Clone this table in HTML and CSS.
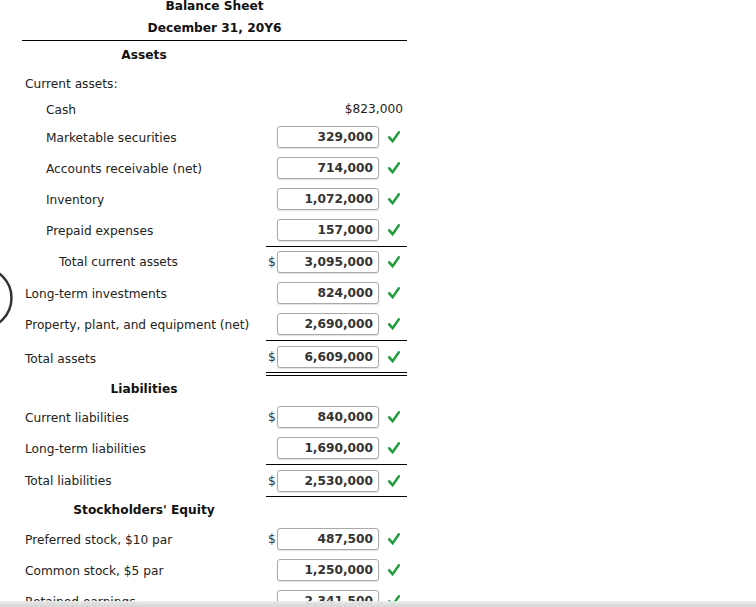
FILE: index.html
```html
<!DOCTYPE html>
<html>
<head>
<meta charset="utf-8">
<link rel="stylesheet" href="styles.css">
</head>
<body>
<svg class="side-circle" width="66" height="66" viewBox="0 0 66 66"><circle cx="33" cy="33" r="30.5" fill="none" stroke="#333" stroke-width="2.5"/></svg>
<div class="sheet">
  <div class="titles">
    <div class="title">Balance Sheet</div>
    <div class="title">December 31, 20Y6</div>
  </div>
  <div class="row head"><span class="label center">Assets</span></div>
  <div class="row cat"><span class="label">Current assets:</span></div>
  <div class="row cash"><span class="label ind1">Cash</span><span class="plain">$823,000</span></div>

  <div class="row"><span class="label ind1">Marketable securities</span><div class="amt"><span class="cur"></span><span class="box">329,000</span><svg class="ok" viewBox="0 0 12 12"><path d="M1.2 6.4 L4.6 10.2 L10.8 1.4"/></svg></div></div>
  <div class="row"><span class="label ind1">Accounts receivable (net)</span><div class="amt"><span class="cur"></span><span class="box">714,000</span><svg class="ok" viewBox="0 0 12 12"><path d="M1.2 6.4 L4.6 10.2 L10.8 1.4"/></svg></div></div>
  <div class="row"><span class="label ind1">Inventory</span><div class="amt"><span class="cur"></span><span class="box">1,072,000</span><svg class="ok" viewBox="0 0 12 12"><path d="M1.2 6.4 L4.6 10.2 L10.8 1.4"/></svg></div></div>
  <div class="row"><span class="label ind1">Prepaid expenses</span><div class="amt"><span class="cur"></span><span class="box">157,000</span><svg class="ok" viewBox="0 0 12 12"><path d="M1.2 6.4 L4.6 10.2 L10.8 1.4"/></svg></div></div>
  <div class="row total tca"><span class="label ind2">Total current assets</span><div class="amt"><span class="cur">$</span><span class="box">3,095,000</span><svg class="ok" viewBox="0 0 12 12"><path d="M1.2 6.4 L4.6 10.2 L10.8 1.4"/></svg></div></div>
  <div class="row"><span class="label">Long-term investments</span><div class="amt"><span class="cur"></span><span class="box">824,000</span><svg class="ok" viewBox="0 0 12 12"><path d="M1.2 6.4 L4.6 10.2 L10.8 1.4"/></svg></div></div>
  <div class="row"><span class="label">Property, plant, and equipment (net)</span><div class="amt"><span class="cur"></span><span class="box">2,690,000</span><svg class="ok" viewBox="0 0 12 12"><path d="M1.2 6.4 L4.6 10.2 L10.8 1.4"/></svg></div></div>
  <div class="row total grand"><span class="label">Total assets</span><div class="amt"><span class="cur">$</span><span class="box">6,609,000</span><svg class="ok" viewBox="0 0 12 12"><path d="M1.2 6.4 L4.6 10.2 L10.8 1.4"/></svg></div></div>

  <div class="row head liab"><span class="label center">Liabilities</span></div>
  <div class="row"><span class="label">Current liabilities</span><div class="amt"><span class="cur">$</span><span class="box">840,000</span><svg class="ok" viewBox="0 0 12 12"><path d="M1.2 6.4 L4.6 10.2 L10.8 1.4"/></svg></div></div>
  <div class="row"><span class="label">Long-term liabilities</span><div class="amt"><span class="cur"></span><span class="box">1,690,000</span><svg class="ok" viewBox="0 0 12 12"><path d="M1.2 6.4 L4.6 10.2 L10.8 1.4"/></svg></div></div>
  <div class="row total single"><span class="label">Total liabilities</span><div class="amt"><span class="cur">$</span><span class="box">2,530,000</span><svg class="ok" viewBox="0 0 12 12"><path d="M1.2 6.4 L4.6 10.2 L10.8 1.4"/></svg></div></div>

  <div class="row head equity"><span class="label center">Stockholders' Equity</span></div>
  <div class="row"><span class="label">Preferred stock, $10 par</span><div class="amt"><span class="cur">$</span><span class="box">487,500</span><svg class="ok" viewBox="0 0 12 12"><path d="M1.2 6.4 L4.6 10.2 L10.8 1.4"/></svg></div></div>
  <div class="row"><span class="label">Common stock, $5 par</span><div class="amt"><span class="cur"></span><span class="box">1,250,000</span><svg class="ok" viewBox="0 0 12 12"><path d="M1.2 6.4 L4.6 10.2 L10.8 1.4"/></svg></div></div>
  <div class="row"><span class="label">Retained earnings</span><div class="amt"><span class="cur"></span><span class="box">2,341,500</span><svg class="ok" viewBox="0 0 12 12"><path d="M1.2 6.4 L4.6 10.2 L10.8 1.4"/></svg></div></div>
</div>
<div class="bottom-bar"></div>
</body>
</html>
```

FILE: styles.css
```css
html, body {
  margin: 0;
  padding: 0;
  overflow: hidden;
  background: #fff;
}
body {
  font-family: "DejaVu Sans", Verdana, sans-serif;
  font-size: 12.2px;
  color: #222;
  position: relative;
  height: 607px;
}
.side-circle {
  position: absolute;
  left: -52px;
  top: 265px;
}
.sheet {
  margin-left: 22px;
  width: 385px;
}
.titles {
  margin-top: -5px;
  padding-bottom: 1px;
  border-bottom: 1px solid #000;
}
.title {
  text-align: center;
  font-weight: bold;
  line-height: 22px;
  color: #111;
}
.row {
  display: flex;
  height: 31px;
  align-items: stretch;
}
.label {
  flex: 1;
  display: flex;
  align-items: center;
  padding-left: 3px;
  padding-top: 2px;
  white-space: nowrap;
}
.label.ind1 { padding-left: 24px; }
.label.ind2 { padding-left: 37px; }
.label.center {
  justify-content: center;
  padding-left: 0;
  padding-top: 0;
  font-weight: bold;
  color: #111;
}
.head { height: 28px; }
.head .label { width: 244px; flex: none; }
.cat { height: 27px; }
.cash { height: 25px; }
.plain {
  display: flex;
  align-items: center;
  padding-right: 4px;
  padding-top: 1px;
}
.amt {
  width: 141px;
  flex: none;
  display: flex;
  align-items: center;
  box-sizing: border-box;
}
.cur {
  width: 11px;
  padding-left: 2px;
  box-sizing: border-box;
  color: #333;
}
.box {
  width: 102px;
  height: 22px;
  box-sizing: border-box;
  border: 1px solid #a9a9a9;
  border-radius: 3px;
  box-shadow: 0 1px 1px rgba(0,0,0,0.12);
  text-align: right;
  padding-right: 5px;
  font-weight: bold;
  color: #333;
  line-height: 20px;
  background: #fff;
}
.ok {
  width: 12px;
  height: 12px;
  margin-left: 9px;
}
.ok path {
  fill: none;
  stroke: #1f9d3b;
  stroke-width: 2.5;
  stroke-linecap: square;
  stroke-linejoin: miter;
}
.total { height: 32px; }
.total .amt {
  margin-top: 1px;
  border-top: 1px solid #000;
}
.grand { height: 37px; }
.grand .amt {
  border-bottom: 4px double #000;
}
.single { height: 34px; }
.single .amt {
  border-bottom: 1px solid #000;
}
.liab { height: 25px; }
.equity { height: 26px; }
.bottom-bar {
  position: fixed;
  left: 0;
  right: 0;
  bottom: 0;
  height: 6px;
  background: linear-gradient(to bottom, rgba(236,236,236,0.92), #d6d6d6);
}
```
